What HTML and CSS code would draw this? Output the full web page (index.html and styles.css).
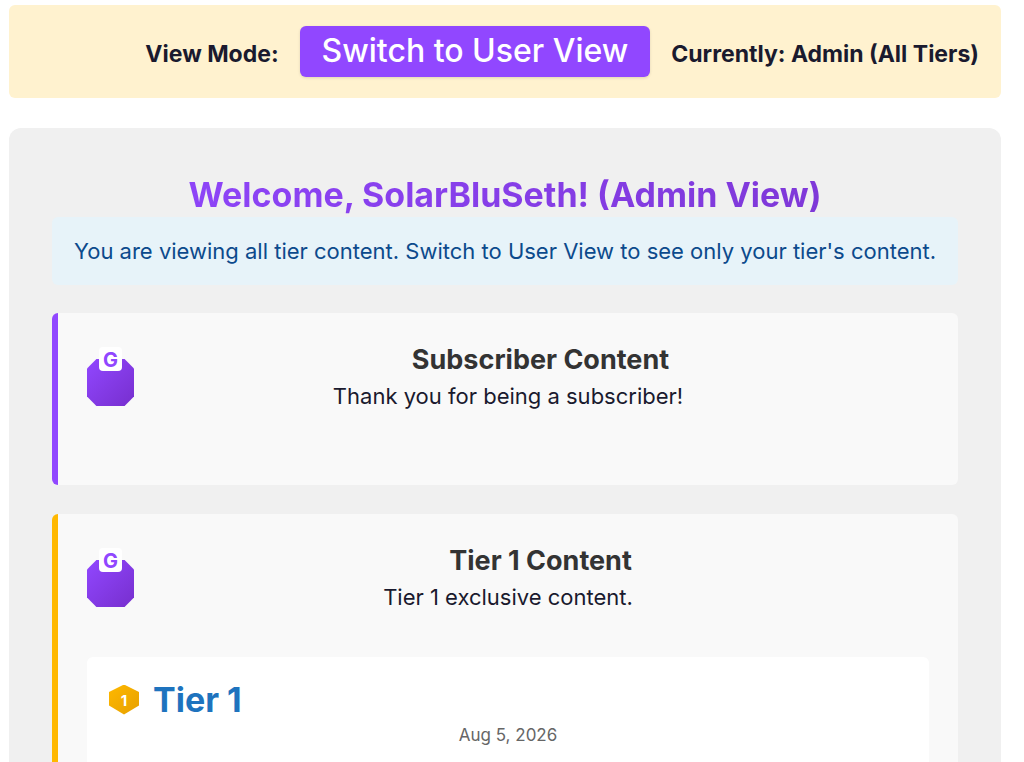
FILE: index.html
```html
<!DOCTYPE html>
<html lang="en">
<head>
<meta charset="utf-8">
<meta name="viewport" content="width=device-width, initial-scale=1">
<title>Subscriber Content</title>
<link rel="stylesheet" href="styles.css">
</head>
<body class="page">
<header class="mode-bar">
  <span>View Mode:</span>
  <button class="mode-button" type="button">Switch to User View</button>
  <span>Currently: Admin (All Tiers)</span>
</header>
<main class="panel">
  <h1 class="welcome">Welcome, SolarBluSeth! (Admin View)</h1>
  <p class="notice">You are viewing all tier content. Switch to User View to see only your tier's content.</p>

  <section class="card">
    <div class="card-head">
      <div class="emblem"><span class="emblem-letter">G</span></div>
      <h2 class="card-title">Subscriber Content</h2>
      <p class="card-text">Thank you for being a subscriber!</p>
    </div>
  </section>

  <section class="card card-tier1">
    <div class="card-head">
      <div class="emblem"><span class="emblem-letter">G</span></div>
      <h2 class="card-title">Tier 1 Content</h2>
      <p class="card-text">Tier 1 exclusive content.</p>
    </div>
    <article class="post">
      <div class="post-head">
        <span class="tier-badge">1</span>
        <h3 class="post-title">Tier 1</h3>
      </div>
      <p class="post-date"><time datetime="2026-08-05">Aug 5, 2026</time></p>
    </article>
  </section>
</main>
</body>
</html>
```
FILE: styles.css
```css
* {
  box-sizing: border-box;
}

.page {
  margin: 0;
  padding: 5px 23px 0 9px;
  background: #fff;
  color: #1a1a2e;
  font-family: Inter, "Liberation Sans", sans-serif;
  font-size: 22px;
  line-height: 36px;
}

.mode-bar {
  display: flex;
  flex-wrap: wrap;
  align-items: baseline;
  justify-content: flex-end;
  gap: 21px;
  padding: 21px 22px;
  border-radius: 6px;
  background: #fff2cf;
  font-size: 23px;
  font-weight: 700;
}

.mode-button {
  padding: 0 22px 2px;
  border: 0;
  border-radius: 6px;
  background: #9147ff;
  box-shadow: 0 1px 3px rgba(0, 0, 0, 0.12);
  color: #fff;
  font-family: Inter, "Liberation Sans", sans-serif;
  font-size: 32px;
  font-weight: 500;
  line-height: 49px;
  cursor: pointer;
}

.panel {
  margin-top: 30px;
  padding: 44px 43px 0;
  border-radius: 12px 12px 0 0;
  background: #f0f0f0;
  text-align: center;
}

.welcome {
  margin: 0;
  background: linear-gradient(135deg, #9147ff, #7b35d0);
  background-clip: text;
  -webkit-background-clip: text;
  color: transparent;
  font-size: 34px;
  font-weight: 700;
  line-height: 45px;
}

.notice {
  margin: 0 0 28px;
  padding: 16px 14px;
  border-radius: 6px;
  background: #e7f3f9;
  color: #0c4a8c;
}

.card {
  margin-bottom: 29px;
  padding: 29px;
  border-left: 6px solid #9147ff;
  border-radius: 6px;
  background: #f9f9f9;
}

.card-tier1 {
  margin-bottom: 0;
  padding-bottom: 0;
  border-left-color: #ffb800;
  border-radius: 6px 6px 0 0;
}

.card-head {
  display: grid;
  grid-template-columns: 47px 1fr;
  column-gap: 18px;
  margin-bottom: 42px;
}

.emblem {
  position: relative;
  grid-area: 1 / 1 / 3 / 2;
  width: 47px;
  height: 47px;
  margin-top: 17px;
}

.emblem::before {
  content: "";
  display: block;
  height: 100%;
  background: linear-gradient(135deg, #9147ff, #772fce);
  clip-path: polygon(20% 0, 80% 0, 100% 20%, 100% 80%, 80% 100%, 20% 100%, 0 80%, 0 20%);
}

.emblem-letter {
  position: absolute;
  top: -12px;
  left: 12px;
  width: 23px;
  height: 24px;
  border-radius: 4px;
  background: #fff;
  color: #9147ff;
  font-size: 20px;
  font-weight: 700;
  line-height: 26px;
}

.card-title {
  grid-area: 1 / 2;
  margin: 0;
  color: #333;
  font-size: 27px;
  font-weight: 700;
}

.card-text {
  grid-area: 2 / 1 / 3 / 3;
  margin: 0;
}

.post {
  padding: 20px 22px 14px;
  border-radius: 6px 6px 0 0;
  background: #fff;
}

.post-head {
  display: flex;
  align-items: center;
  gap: 14px;
}

.tier-badge {
  width: 30px;
  height: 30px;
  background: linear-gradient(135deg, #ffb800, #e6a000);
  clip-path: polygon(50% 0, 100% 25%, 100% 70%, 50% 100%, 0 70%, 0 25%);
  color: #fff;
  font-size: 15px;
  font-weight: 700;
  line-height: 31px;
}

.post-title {
  margin: 0;
  color: #1e73be;
  font-size: 34px;
  font-weight: 700;
  line-height: 45px;
}

.post-date {
  margin: 0;
  color: #666;
  font-size: 17px;
  line-height: 26px;
}
```
